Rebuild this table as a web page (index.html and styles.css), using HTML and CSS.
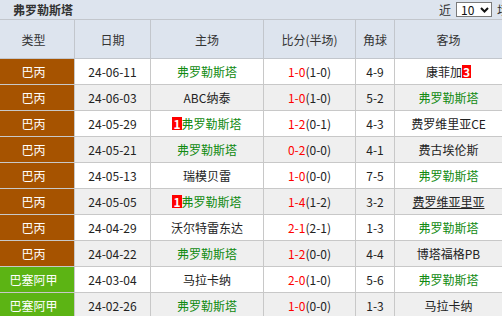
FILE: index.html
```html
<!DOCTYPE html>
<html lang="zh-CN">
<head>
<meta charset="utf-8">
<title>弗罗勒斯塔</title>
<link rel="stylesheet" href="styles.css">
</head>
<body>
<div class="page">
  <div class="titlebar">
    <span class="title">弗罗勒斯塔</span>
    <span class="filter">
      <span>近</span>
      <span class="sel">10<svg class="chev" width="9" height="6" viewBox="0 0 9 6"><polyline points="1,1 4.5,4.5 8,1" fill="none" stroke="#111" stroke-width="2"/></svg></span>
      <span>场</span>
    </span>
  </div>
  <div class="grid">
    <div class="row head">
      <div class="c c1">类型</div><div class="c">日期</div><div class="c">主场</div><div class="c">比分(半场)</div><div class="c">角球</div><div class="c">客场</div>
    </div>
    <div class="row">
      <div class="c c1 lg3">巴丙</div><div class="c">24-06-11</div><div class="c g">弗罗勒斯塔</div><div class="c"><span class="r">1-0</span>(1-0)</div><div class="c">4-9</div><div class="c">康菲加<span class="badge">3</span></div>
    </div>
    <div class="row alt">
      <div class="c c1 lg3">巴丙</div><div class="c">24-06-03</div><div class="c">ABC纳泰</div><div class="c"><span class="r">1-0</span>(1-0)</div><div class="c">5-2</div><div class="c g">弗罗勒斯塔</div>
    </div>
    <div class="row">
      <div class="c c1 lg3">巴丙</div><div class="c">24-05-29</div><div class="c g"><span class="badge">1</span>弗罗勒斯塔</div><div class="c"><span class="r">1-2</span>(0-1)</div><div class="c">4-3</div><div class="c">费罗维里亚CE</div>
    </div>
    <div class="row alt">
      <div class="c c1 lg3">巴丙</div><div class="c">24-05-21</div><div class="c g">弗罗勒斯塔</div><div class="c"><span class="r">0-2</span>(0-0)</div><div class="c">4-1</div><div class="c">费古埃伦斯</div>
    </div>
    <div class="row">
      <div class="c c1 lg3">巴丙</div><div class="c">24-05-13</div><div class="c">瑞模贝雷</div><div class="c"><span class="r">1-0</span>(0-0)</div><div class="c">7-5</div><div class="c g">弗罗勒斯塔</div>
    </div>
    <div class="row alt">
      <div class="c c1 lg3">巴丙</div><div class="c">24-05-05</div><div class="c g"><span class="badge">1</span>弗罗勒斯塔</div><div class="c"><span class="r">1-4</span>(1-2)</div><div class="c">3-2</div><div class="c"><span class="u">费罗维亚里亚</span></div>
    </div>
    <div class="row">
      <div class="c c1 lg3">巴丙</div><div class="c">24-04-29</div><div class="c">沃尔特雷东达</div><div class="c"><span class="r">2-1</span>(2-1)</div><div class="c">1-3</div><div class="c g">弗罗勒斯塔</div>
    </div>
    <div class="row alt">
      <div class="c c1 lg3">巴丙</div><div class="c">24-04-22</div><div class="c g">弗罗勒斯塔</div><div class="c"><span class="r">1-2</span>(0-0)</div><div class="c">4-4</div><div class="c">博塔福格PB</div>
    </div>
    <div class="row">
      <div class="c c1 lg1">巴塞阿甲</div><div class="c">24-03-04</div><div class="c">马拉卡纳</div><div class="c"><span class="r">2-0</span>(1-0)</div><div class="c">5-6</div><div class="c g">弗罗勒斯塔</div>
    </div>
    <div class="row alt">
      <div class="c c1 lg1">巴塞阿甲</div><div class="c">24-02-26</div><div class="c g">弗罗勒斯塔</div><div class="c"><span class="r">1-0</span>(0-0)</div><div class="c">1-3</div><div class="c">马拉卡纳</div>
    </div>
  </div>
</div>
</body>
</html>
```
FILE: styles.css
```css
html, body {
  margin: 0;
  padding: 0;
  overflow: hidden;
}
body {
  font-family: "Noto Sans CJK SC", "Microsoft YaHei", sans-serif;
  font-size: 12px;
  color: #333;
  background: #fff;
}
.page {
  width: 520px;
}
.titlebar {
  height: 20px;
  box-sizing: border-box;
  background: #dde4ee;
  border-bottom: 1px solid #c2c6cc;
  display: flex;
  align-items: center;
  justify-content: space-between;
  padding: 0 11px 0 13px;
}
.title {
  font-weight: bold;
  font-size: 12px;
  color: #333;
}
.filter {
  display: flex;
  align-items: center;
  gap: 5px;
  color: #333;
}
.sel {
  display: flex;
  align-items: center;
  justify-content: space-between;
  box-sizing: border-box;
  width: 36px;
  height: 15px;
  padding: 0 2px 0 4px;
  background: #fff;
  border: 1px solid #7a7a7a;
  color: #111;
  line-height: 13px;
}
.grid {
  width: 502px;
}
.row {
  display: grid;
  grid-template-columns: 75px 76px 113px 92px 39px 107px;
  height: 26px;
  box-sizing: border-box;
  border-bottom: 1px solid #c8c8c8;
  background: #fff;
}
.row.alt {
  background: #efefef;
}
.row.head {
  height: 39px;
  background: #dde4ee;
  border-bottom-color: #c2c6cc;
}
.c {
  box-sizing: border-box;
  border-right: 1px solid #c8c8c8;
  display: flex;
  align-items: center;
  justify-content: center;
  white-space: nowrap;
  color: #222;
}
.head .c {
  border-right-color: #c2c6cc;
  color: #333;
}
.c:last-child {
  border-right: none;
}
.c1 {
  padding-right: 7px;
}
.lg3 {
  background: #a65300;
  color: #fff;
}
.lg1 {
  background: #5cb414;
  color: #fff;
}
.g {
  color: #108a10;
}
.r {
  color: #ff0000;
}
.u {
  text-decoration: underline;
}
.badge {
  display: inline-block;
  background: #ff0000;
  color: #fff;
  font-weight: bold;
  font-size: 12px;
  line-height: 13px;
  padding: 0 1px;
}
```
